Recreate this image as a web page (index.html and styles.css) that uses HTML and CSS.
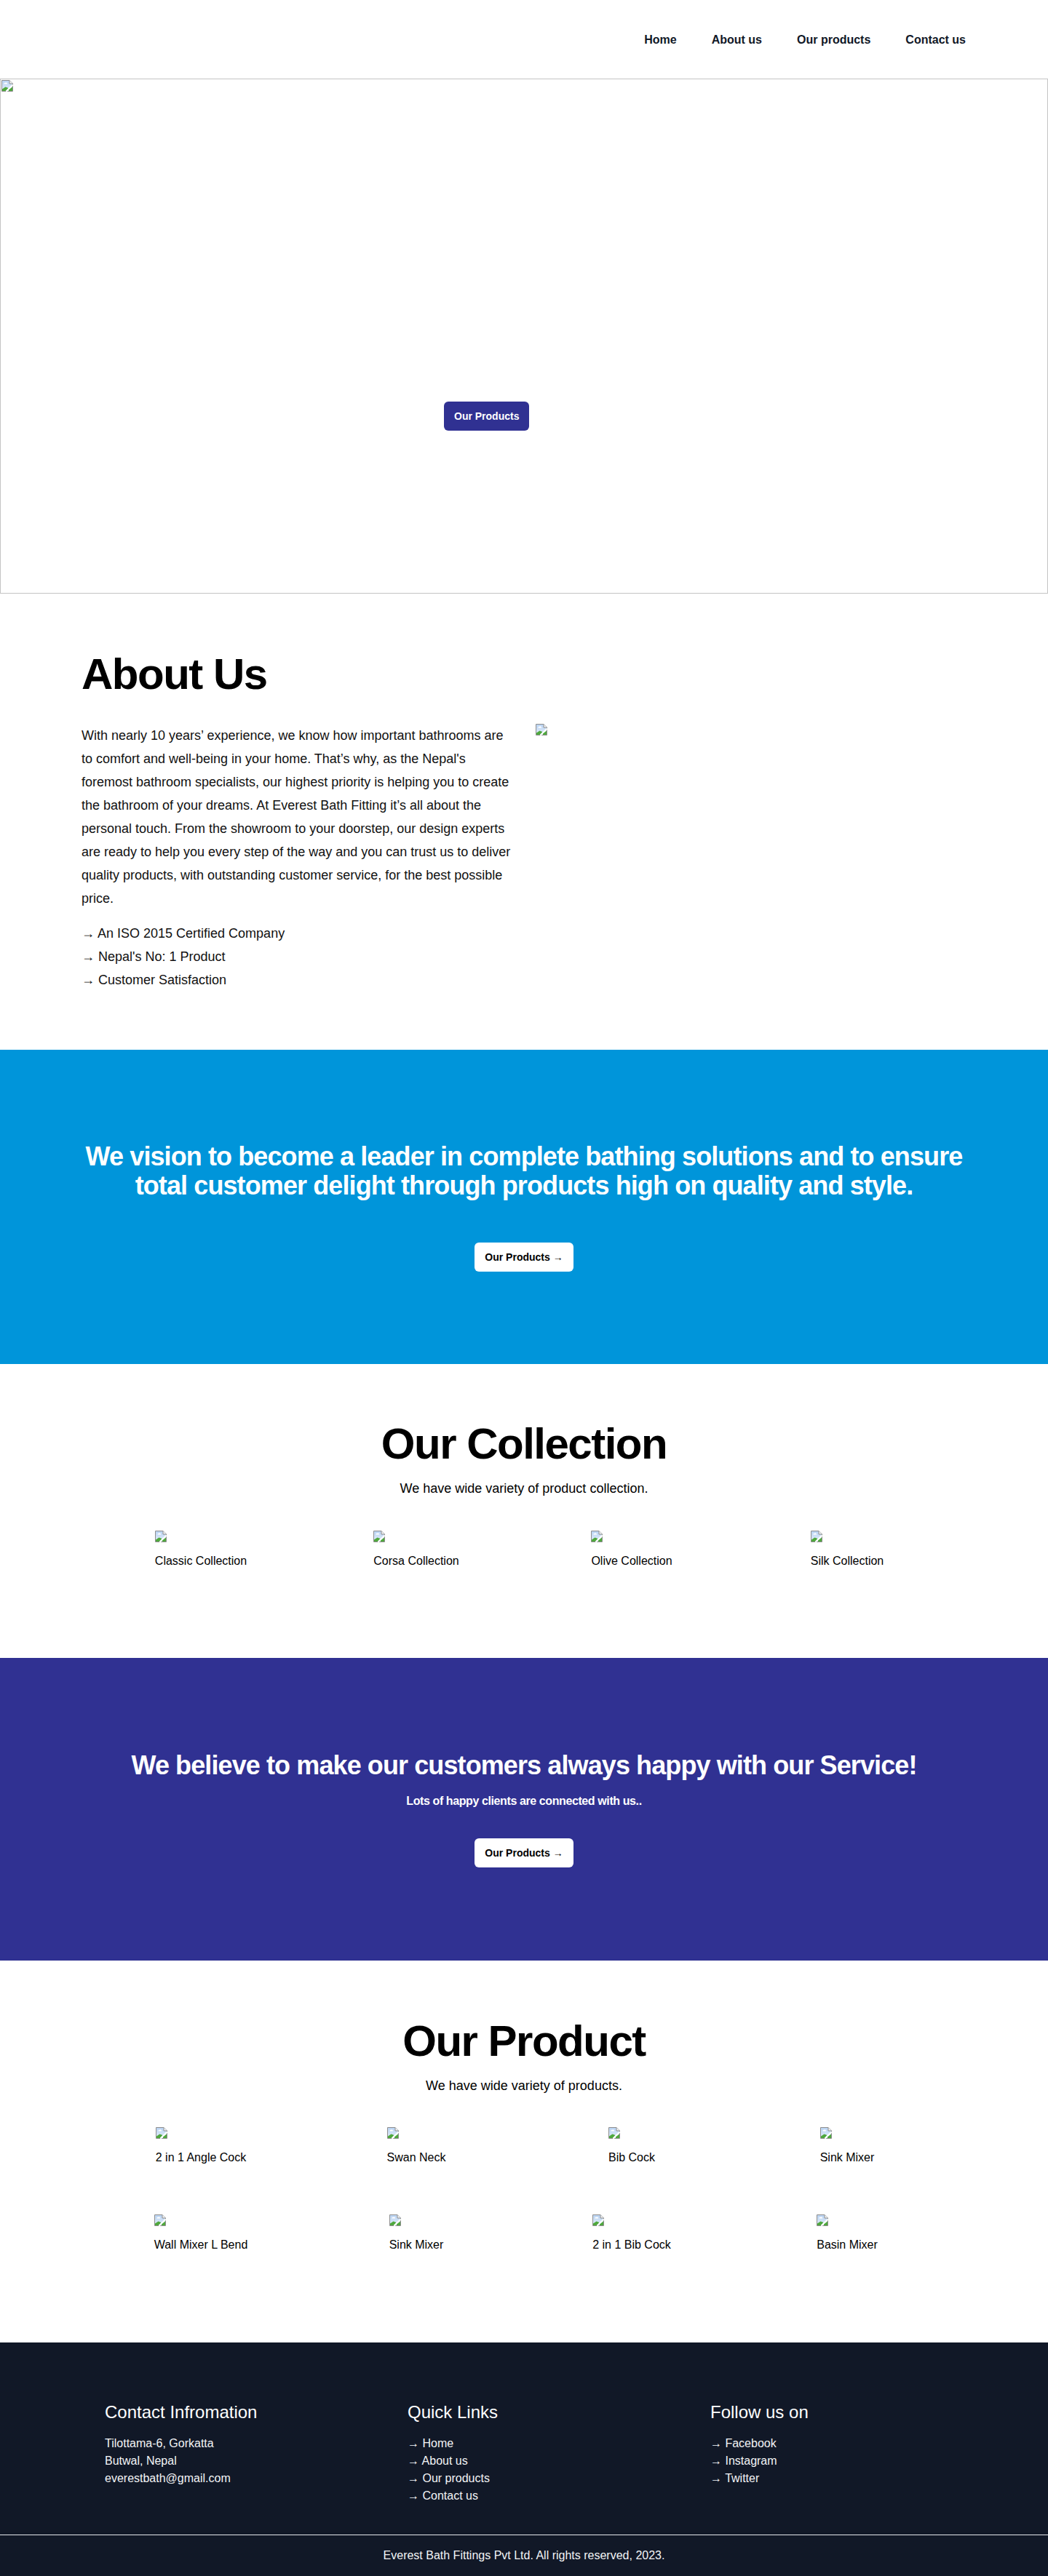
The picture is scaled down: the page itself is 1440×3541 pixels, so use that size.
FILE: index.html
```html
<!DOCTYPE html>
<html lang="en">
<head>
<meta charset="utf-8">
<title>Everest Bath Fittings</title>
<link rel="stylesheet" href="styles.css">
</head>
<body>
<svg class="defs" width="0" height="0" aria-hidden="true">
  <defs>
    <linearGradient id="sky" x1="0" y1="0" x2="0" y2="1">
      <stop offset="0" stop-color="#b9d3f3"/>
      <stop offset="1" stop-color="#e4eefa"/>
    </linearGradient>
    <symbol id="broken" viewBox="0 0 16 16">
      <path d="M0.5 0.5H11L15.5 5V15.5H0.5Z" fill="url(#sky)" stroke="#8e8e8e"/>
      <path d="M11 0.5V5H15.5" fill="#f4f4f4" stroke="#8e8e8e"/>
      <path d="M3.5 5.2c0-1 1-1.6 1.8-1.2c.4-.9 1.9-.9 2.2.2c.8 0 1.1 1 .4 1.3H3.8z" fill="#fff"/>
      <path d="M1 15V12.5L5.5 9.5L9.5 11L6 15Z" fill="#4fa83d"/>
      <path d="M6.5 15.8L15.8 6.5" stroke="#fff" stroke-width="2"/>
      <path d="M10 15V13.5L15 9.5V15Z" fill="#4fa83d"/>
    </symbol>
  </defs>
</svg>

<header class="nav">
  <ul class="nav-links">
    <li><a href="#">Home</a></li>
    <li><a href="#">About us</a></li>
    <li><a href="#">Our products</a></li>
    <li><a href="#">Contact us</a></li>
  </ul>
</header>

<section class="hero">
  <svg class="broken hero-icon" width="16" height="16"><use href="#broken"/></svg>
  <a class="btn btn-primary hero-btn" href="#">Our Products</a>
</section>

<section class="about">
  <div class="container">
    <h1 class="about-title">About Us</h1>
    <div class="about-grid">
      <div>
        <p class="about-text">With nearly 10 years’ experience, we know how important bathrooms are to comfort and well-being in your home. That’s why, as the Nepal's foremost bathroom specialists, our highest priority is helping you to create the bathroom of your dreams. At Everest Bath Fitting it’s all about the personal touch. From the showroom to your doorstep, our design experts are ready to help you every step of the way and you can trust us to deliver quality products, with outstanding customer service, for the best possible price.</p>
        <ul class="about-list">
          <li>→ An ISO 2015 Certified Company</li>
          <li>→ Nepal's No: 1 Product</li>
          <li>→ Customer Satisfaction</li>
        </ul>
      </div>
      <div>
        <svg class="broken" width="16" height="16"><use href="#broken"/></svg>
      </div>
    </div>
  </div>
</section>

<section class="band band-blue">
  <div class="container">
    <h2 class="band-title">We vision to become a leader in complete bathing solutions and to ensure total customer delight through products high on quality and style.</h2>
    <a class="btn btn-light band-btn-vision" href="#">Our Products →</a>
  </div>
</section>

<section class="listing listing-collection">
  <div class="container">
    <h2 class="listing-title">Our Collection</h2>
    <p class="listing-sub">We have wide variety of product collection.</p>
    <div class="grid">
      <div class="item"><svg class="broken" width="16" height="16"><use href="#broken"/></svg><p>Classic Collection</p></div>
      <div class="item"><svg class="broken" width="16" height="16"><use href="#broken"/></svg><p>Corsa Collection</p></div>
      <div class="item"><svg class="broken" width="16" height="16"><use href="#broken"/></svg><p>Olive Collection</p></div>
      <div class="item"><svg class="broken" width="16" height="16"><use href="#broken"/></svg><p>Silk Collection</p></div>
    </div>
  </div>
</section>

<section class="band band-purple">
  <div class="container">
    <h2 class="band-title">We believe to make our customers always happy with our Service!</h2>
    <p class="band-sub">Lots of happy clients are connected with us..</p>
    <a class="btn btn-light band-btn-service" href="#">Our Products →</a>
  </div>
</section>

<section class="listing listing-products">
  <div class="container">
    <h2 class="listing-title">Our Product</h2>
    <p class="listing-sub">We have wide variety of products.</p>
    <div class="grid">
      <div class="item"><svg class="broken" width="16" height="16"><use href="#broken"/></svg><p>2 in 1 Angle Cock</p></div>
      <div class="item"><svg class="broken" width="16" height="16"><use href="#broken"/></svg><p>Swan Neck</p></div>
      <div class="item"><svg class="broken" width="16" height="16"><use href="#broken"/></svg><p>Bib Cock</p></div>
      <div class="item"><svg class="broken" width="16" height="16"><use href="#broken"/></svg><p>Sink Mixer</p></div>
      <div class="item"><svg class="broken" width="16" height="16"><use href="#broken"/></svg><p>Wall Mixer L Bend</p></div>
      <div class="item"><svg class="broken" width="16" height="16"><use href="#broken"/></svg><p>Sink Mixer</p></div>
      <div class="item"><svg class="broken" width="16" height="16"><use href="#broken"/></svg><p>2 in 1 Bib Cock</p></div>
      <div class="item"><svg class="broken" width="16" height="16"><use href="#broken"/></svg><p>Basin Mixer</p></div>
    </div>
  </div>
</section>

<footer class="footer">
  <div class="footer-grid">
    <div class="footer-col">
      <h3>Contact Infromation</h3>
      <ul>
        <li>Tilottama-6, Gorkatta</li>
        <li>Butwal, Nepal</li>
        <li>everestbath@gmail.com</li>
      </ul>
    </div>
    <div class="footer-col">
      <h3>Quick Links</h3>
      <ul>
        <li>→ Home</li>
        <li>→ About us</li>
        <li>→ Our products</li>
        <li>→ Contact us</li>
      </ul>
    </div>
    <div class="footer-col">
      <h3>Follow us on</h3>
      <ul>
        <li>→ Facebook</li>
        <li>→ Instagram</li>
        <li>→ Twitter</li>
      </ul>
    </div>
  </div>
  <div class="footer-bottom">Everest Bath Fittings Pvt Ltd. All rights reserved, 2023.</div>
</footer>
</body>
</html>
```

FILE: styles.css
```css
* { box-sizing: border-box; }

html, body {
  margin: 0;
  padding: 0;
  background: #fff;
  color: #000;
  font-family: "Liberation Sans", Arial, Helvetica, sans-serif;
}

a { text-decoration: none; color: inherit; }

.defs { position: absolute; width: 0; height: 0; overflow: hidden; }

.broken { display: block; width: 16px; height: 16px; }

.container {
  max-width: 1280px;
  margin: 0 auto;
  padding: 0 32px;
}

/* NAV */
.nav {
  height: 108px;
  display: flex;
  align-items: center;
  justify-content: flex-end;
  padding: 2px 89px 0 0;
}
.nav-links {
  display: flex;
  list-style: none;
  margin: 0;
  padding: 0;
}
.nav-links a {
  display: block;
  padding: 0 24px;
  font-size: 16px;
  line-height: 24px;
  font-weight: 700;
  color: #111827;
}

/* HERO */
.hero {
  position: relative;
  height: 708px;
  border: 1px solid #c4c4c4;
  padding: 1px;
}
.hero-btn {
  position: absolute;
  left: 609px;
  top: 443px;
}

/* BUTTONS */
.btn {
  display: inline-block;
  font-size: 14px;
  line-height: 16px;
  font-weight: 700;
  padding: 12px 14px;
  border-radius: 6px;
}
.btn-primary { background: #303192; color: #fff; }
.btn-light { background: #fff; color: #000; }

/* ABOUT */
.about { padding: 81px 0 80px; }
.about-title {
  margin: 0 0 38px;
  font-size: 60px;
  line-height: 60px;
  font-weight: 700;
  letter-spacing: -1.5px;
}
.about-grid {
  display: grid;
  grid-template-columns: 1fr 1fr;
  column-gap: 32px;
}
.about-text {
  margin: 0;
  font-size: 18px;
  line-height: 32px;
  color: #111;
}
.about-list {
  list-style: none;
  margin: 16px 0 0;
  padding: 0;
  font-size: 18px;
  line-height: 32px;
  color: #111;
}

/* BANDS */
.band {
  text-align: center;
  color: #fff;
}
.band-blue { background: #0095da; padding: 127px 0 127px; }
.band-purple { background: #303192; padding: 128px 0 128px; }
.band-title {
  margin: 0;
  font-size: 36px;
  line-height: 40px;
  font-weight: 700;
  letter-spacing: -0.9px;
}
.band-btn-vision { margin-top: 58px; }
.band-sub {
  margin: 17px 0 0;
  font-size: 16px;
  line-height: 24px;
  font-weight: 700;
  letter-spacing: -0.4px;
}
.band-btn-service { margin-top: 39px; }

/* LISTINGS */
.listing { text-align: center; }
.listing-collection { padding: 80px 0 121px; }
.listing-products { padding: 81px 0 122px; }
.listing-title {
  margin: 0;
  font-size: 60px;
  line-height: 60px;
  font-weight: 700;
  letter-spacing: -1.5px;
}
.listing-sub {
  margin: 17px 0 0;
  font-size: 18px;
  line-height: 28px;
}
.grid {
  display: grid;
  grid-template-columns: repeat(4, 1fr);
  justify-items: center;
  row-gap: 66px;
  margin-top: 44px;
  padding: 0 16px;
}
.listing-products .grid { margin-top: 43px; }
.item {
  text-align: left;
}
.item p {
  margin: 14px 0 0;
  font-size: 16px;
  line-height: 24px;
  color: #000;
}

/* FOOTER */
.footer {
  background: #111827;
  color: #fff;
}
.footer-grid {
  display: grid;
  grid-template-columns: 416px 416px 416px;
  justify-content: start;
  padding: 80px 0 41px 144px;
}
.footer-col h3 {
  margin: 0 0 15px;
  font-size: 24px;
  line-height: 32px;
  font-weight: 400;
}
.footer-col ul {
  list-style: none;
  margin: 0;
  padding: 0;
  font-size: 16px;
  line-height: 24px;
  color: #f3f4f6;
}
.footer-bottom {
  border-top: 1px solid #e5e7eb;
  padding: 16px 0;
  text-align: center;
  font-size: 16px;
  line-height: 24px;
  color: #f3f4f6;
}
```
